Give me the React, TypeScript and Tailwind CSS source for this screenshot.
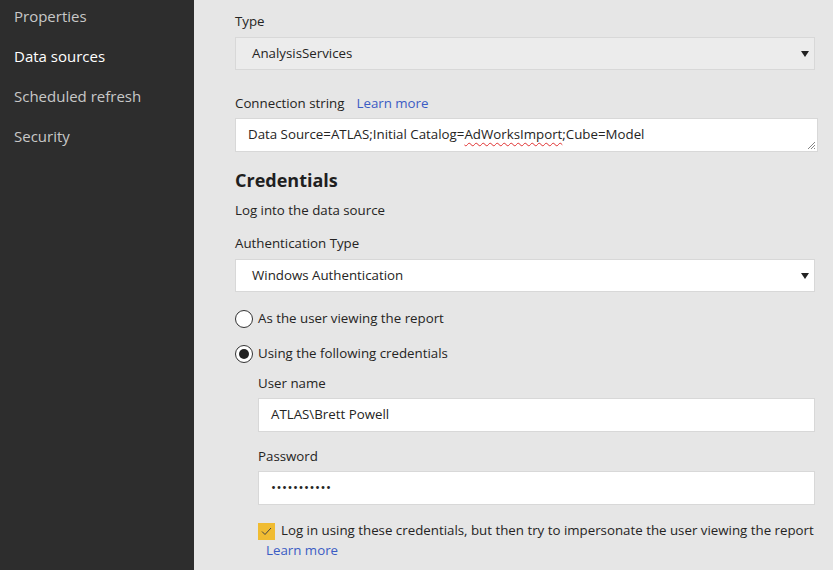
const NAV = [
  { label: "Properties", active: false },
  { label: "Data sources", active: true },
  { label: "Scheduled refresh", active: false },
  { label: "Security", active: false },
];

function Caret() {
  return (
    <svg width="8" height="6" viewBox="0 0 8 6" className="shrink-0">
      <path d="M0 0h8L4 6z" fill="#222" />
    </svg>
  );
}

function Radio({ checked, label }: { checked?: boolean; label: string }) {
  return (
    <div className="flex h-[18px] items-center gap-[5px]">
      <span className="flex size-[18px] items-center justify-center rounded-full border border-[#333] bg-white">
        {checked && <span className="size-[10px] rounded-full bg-[#222]" />}
      </span>
      <span>{label}</span>
    </div>
  );
}

export default function App() {
  return (
    <div
      className="flex h-[570px] w-[833px] overflow-hidden text-[13.3px] text-[#252423]"
      style={{ fontFamily: '"Segoe UI", "Open Sans", sans-serif' }}
    >
      <nav className="flex w-[194px] shrink-0 flex-col gap-[18px] bg-[#2d2d2d] pl-[14px] pt-[5px] text-[15px]">
        {NAV.map((n) => (
          <div key={n.label} className={`h-[22px] ${n.active ? "text-white" : "text-[#c8c8c8]"}`}>
            {n.label}
          </div>
        ))}
      </nav>

      <main className="flex-1 bg-[#e6e6e6] pl-[41px] pr-[18px] pt-[12px]">
        <div className="h-[20px]">Type</div>
        <div className="mt-[5px] flex h-[33px] items-center justify-between border border-[#d8d8d8] bg-[#ececec] pl-[16px] pr-[5px]">
          <span>AnalysisServices</span>
          <Caret />
        </div>

        <div className="mt-[24px] flex h-[20px] items-center gap-[12px]">
          <span>Connection string</span>
          <span className="text-[#3b5cc4]">Learn more</span>
        </div>
        <div className="relative mr-[-3px] mt-[4px] flex h-[34px] items-center border border-[#d8d8d8] bg-white pl-[12px]">
          <span>
            Data Source=ATLAS;Initial Catalog=
            <span className="underline decoration-[#e03030] decoration-wavy decoration-1 underline-offset-[3px]">AdWorksImport</span>
            ;Cube=Model
          </span>
          <svg width="7" height="7" viewBox="0 0 7 7" className="absolute bottom-[2px] right-[2px]">
            <path d="M7 0L0 7M7 3L3 7M7 6L6 7" stroke="#666" strokeWidth="0.8" />
          </svg>
        </div>

        <h2 className="mt-[15px] h-[24px] text-[18px] font-bold text-[#1f1f1f]">Credentials</h2>
        <div className="mt-[10px] h-[20px]">Log into the data source</div>
        <div className="mt-[13px] h-[20px]">Authentication Type</div>
        <div className="mt-[5px] flex h-[33px] items-center justify-between border border-[#d8d8d8] bg-white pl-[16px] pr-[5px]">
          <span>Windows Authentication</span>
          <Caret />
        </div>

        <div className="mt-[18px] flex flex-col gap-[17px]">
          <Radio label="As the user viewing the report" />
          <Radio checked label="Using the following credentials" />
        </div>

        <div className="ml-[23px]">
          <div className="mt-[11px] h-[20px]">User name</div>
          <div className="mt-[4px] flex h-[34px] items-center border border-[#d8d8d8] bg-white pl-[12px]">
            ATLAS\Brett Powell
          </div>
          <div className="mt-[15px] h-[20px]">Password</div>
          <div className="mt-[4px] flex h-[34px] items-center border border-[#d8d8d8] bg-white pl-[12px] tracking-[0.5px]">
            •••••••••••
          </div>
          <div className="mt-[17px] flex h-[18px] items-center gap-[6px] whitespace-nowrap">
            <span className="flex size-[17px] shrink-0 items-center justify-center bg-[#f0bc32]">
              <svg width="11" height="9" viewBox="0 0 11 9">
                <path d="M1 4.5L4 7.5L10 1" fill="none" stroke="#444" strokeWidth="1" />
              </svg>
            </span>
            <span>Log in using these credentials, but then try to impersonate the user viewing the report</span>
          </div>
          <div className="ml-[8px] mt-[1px] text-[#3b5cc4]">Learn more</div>
        </div>
      </main>
    </div>
  );
}
